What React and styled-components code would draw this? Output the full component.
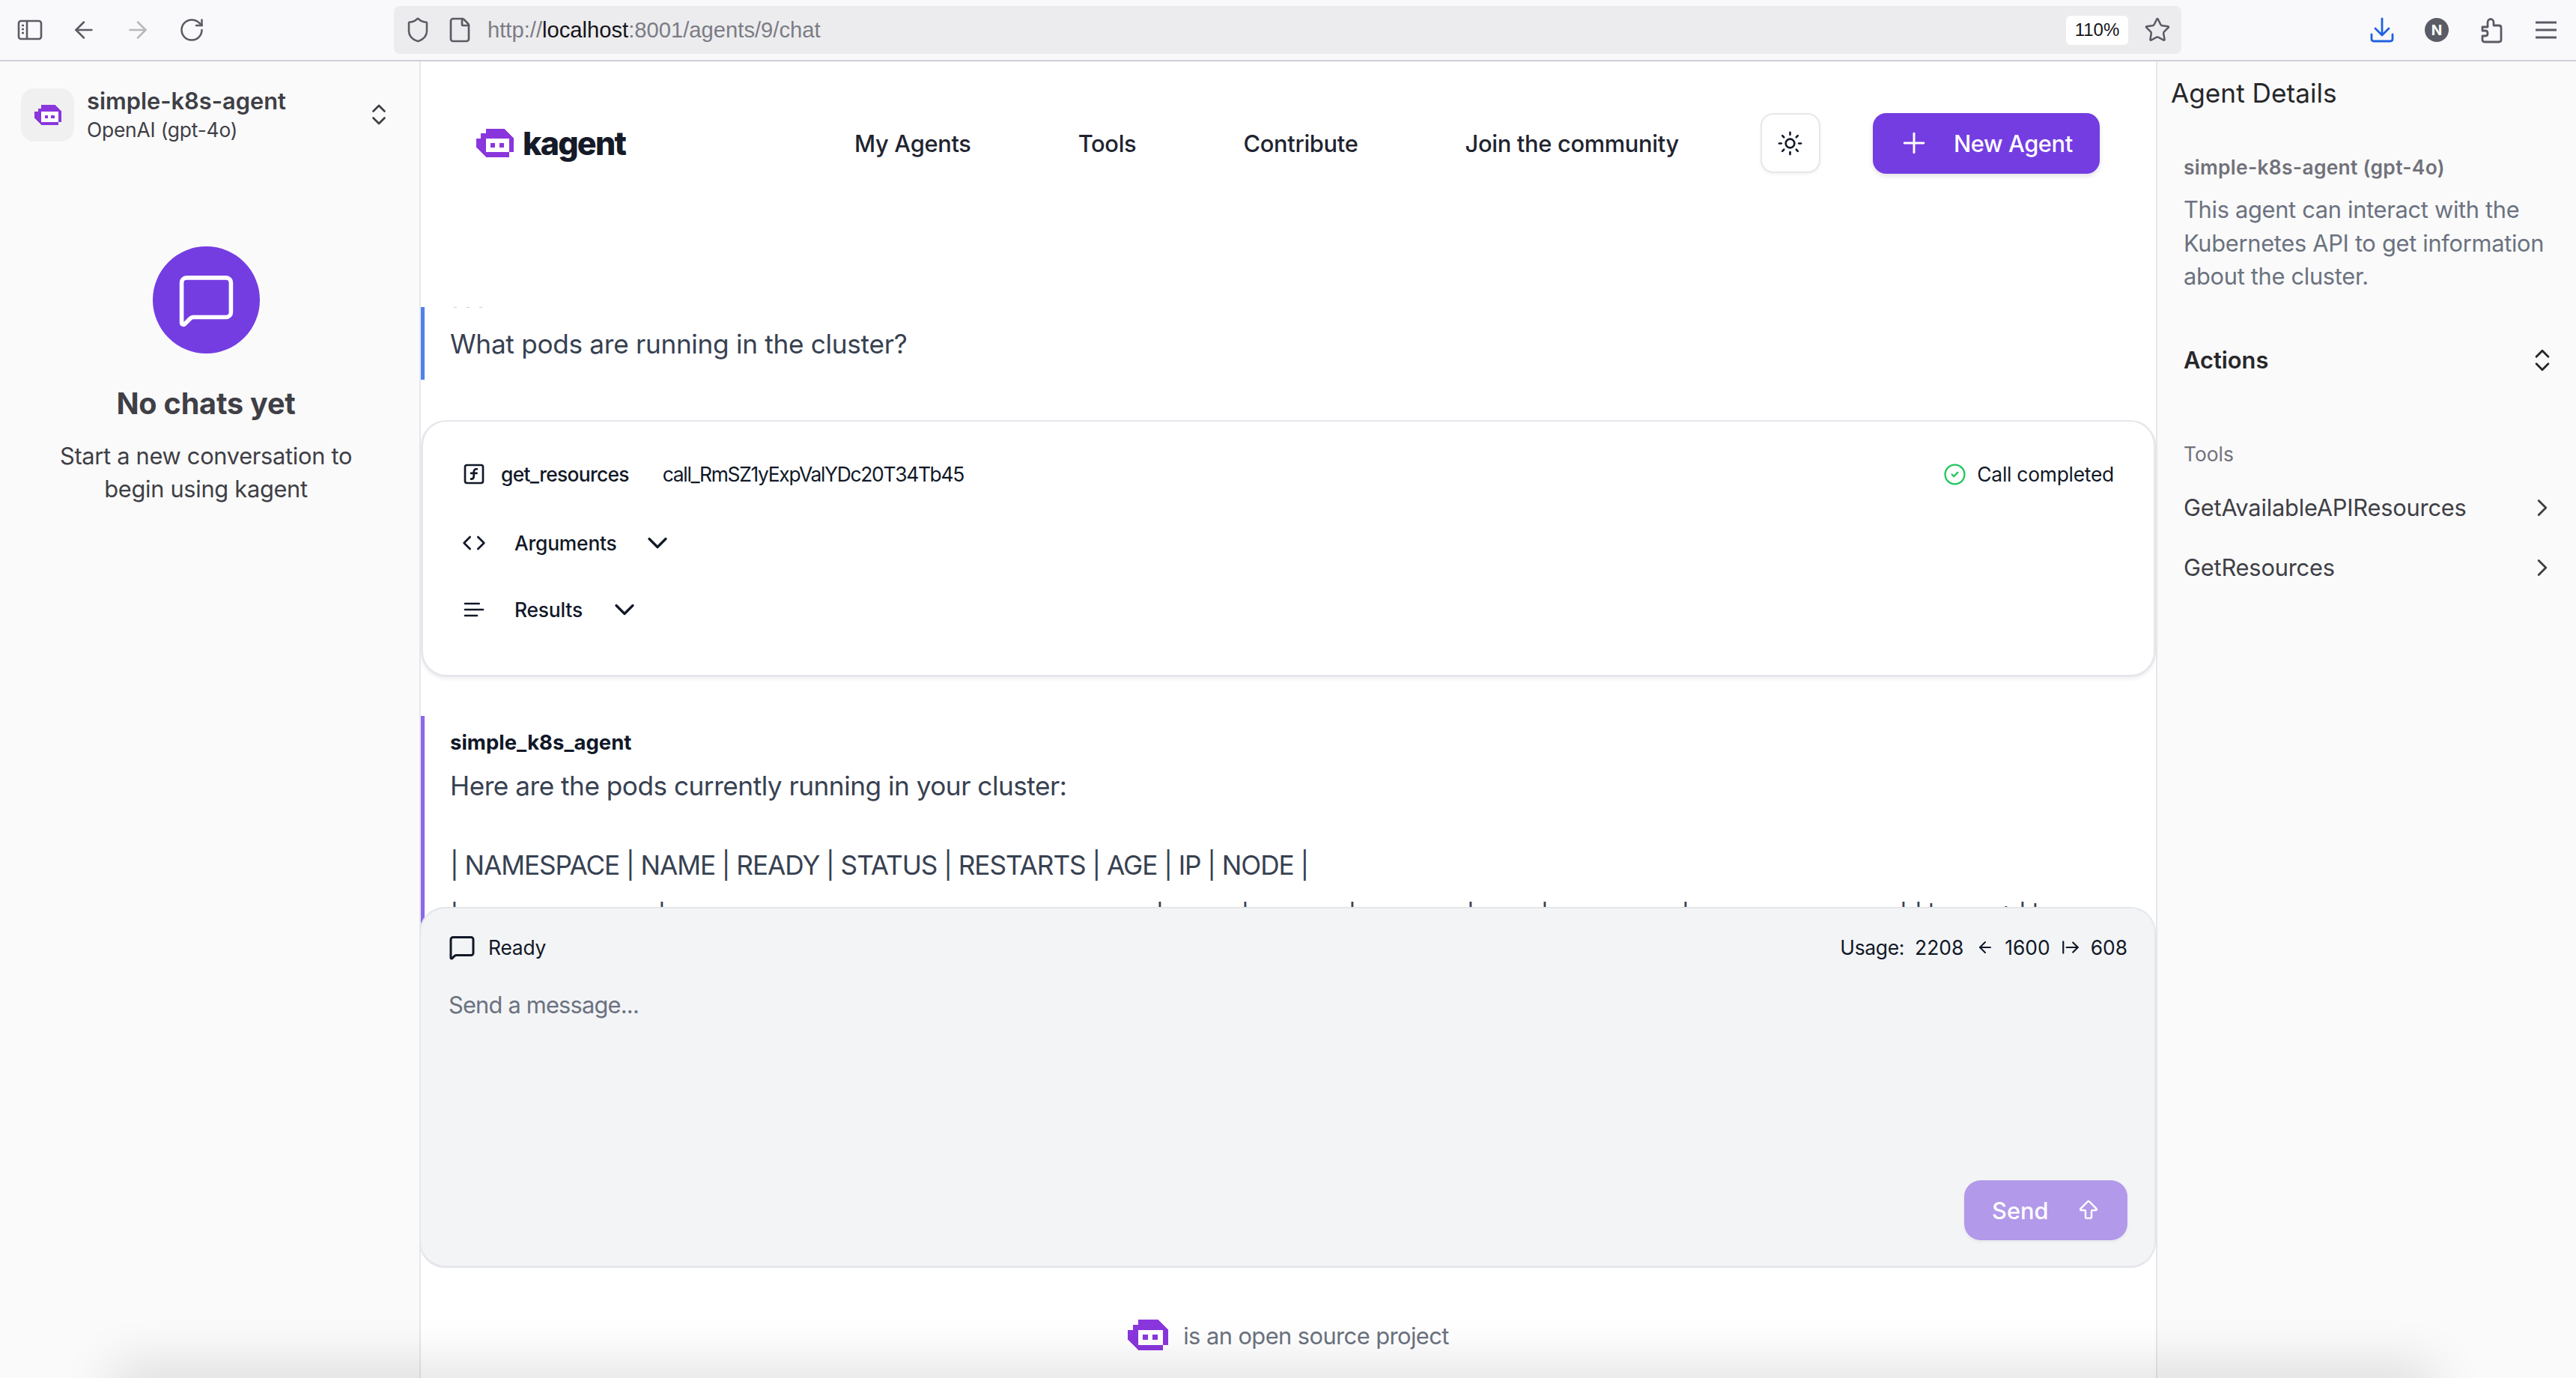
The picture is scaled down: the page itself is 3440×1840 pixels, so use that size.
import React from "react";
import styled, { createGlobalStyle } from "styled-components";
import {
  ArrowLeft,
  ArrowRight,
  ArrowRightFromLine,
  ArrowBigUp,
  ChevronDown,
  ChevronRight,
  ChevronsUpDown,
  CircleCheck,
  Code,
  File,
  MessageSquare,
  Plus,
  RotateCw,
  Shield,
  SquareFunction,
  Star,
  Sun,
} from "lucide-react";

const GlobalStyle = createGlobalStyle`
  html, body {
    margin: 0;
    padding: 0;
    height: 100%;
    background: #ffffff;
    font-family: Inter, "Noto Sans", "Liberation Sans", sans-serif;
  }
  * { box-sizing: border-box; }
`;

const Page = styled.div`
  position: relative;
  width: 100vw;
  height: 100vh;
  display: flex;
  flex-direction: column;
  overflow: hidden;
`;

/* browser toolbar */
const BrowserBar = styled.div`
  flex: none;
  height: 82px;
  padding: 8px 22px;
  display: flex;
  align-items: center;
  background: #f9f9fb;
  border-bottom: 2px solid #cfcfd8;
`;

const ToolGroup = styled.div`
  display: flex;
  align-items: center;
  gap: ${(p) => p.$gap || 36}px;
`;

const ToolIcon = styled.span`
  width: 36px;
  height: 36px;
  margin-left: ${(p) => p.$before || 0}px;
  display: flex;
  align-items: center;
  justify-content: center;
  color: ${(p) => p.$color || "#5b5b66"};
`;

const UrlBar = styled.div`
  margin-left: 252px;
  width: 2387px;
  height: 64px;
  padding: 0 14px;
  display: flex;
  align-items: center;
  background: #ececee;
  border-radius: 8px;
`;

const UrlText = styled.div`
  margin-left: 19px;
  font-family: "Liberation Sans", sans-serif;
  font-size: 29.2px;
  color: #7c7c85;
  white-space: nowrap;
  b {
    font-weight: 400;
    color: #15141a;
  }
`;

const ZoomChip = styled.div`
  margin-left: auto;
  margin-right: 21px;
  width: 83px;
  height: 39px;
  display: flex;
  align-items: center;
  justify-content: center;
  background: #ffffff;
  border-radius: 6px;
  font-family: "Liberation Sans", sans-serif;
  font-size: 24px;
  color: #15141a;
`;

const RightTools = styled(ToolGroup)`
  margin-left: auto;
`;

const NBadge = styled.span`
  width: 32px;
  height: 32px;
  border-radius: 50%;
  display: flex;
  align-items: center;
  justify-content: center;
  background: #5b5b66;
  color: #ffffff;
  font-size: 19px;
  font-weight: 700;
`;

/* three panel layout */
const Workspace = styled.div`
  flex: 1;
  min-height: 0;
  display: flex;
`;

const LeftPanel = styled.aside`
  flex: none;
  width: 562px;
  background: #fafafa;
  border-right: 2px solid #e5e7eb;
`;

const AgentPicker = styled.div`
  padding: 33px 36px 0 28px;
  display: flex;
  align-items: center;
`;

const AgentAvatar = styled.div`
  flex: none;
  width: 71px;
  height: 71px;
  margin-right: 17px;
  display: flex;
  align-items: center;
  justify-content: center;
  background: #f0f0f0;
  border-radius: 18px;
`;

const AgentText = styled.div`
  flex: 1;
  display: flex;
  flex-direction: column;
`;

const AgentName = styled.div`
  font-size: 30.8px;
  line-height: 40px;
  font-weight: 600;
  color: #3f3f46;
`;

const AgentModel = styled.div`
  font-size: 26.4px;
  line-height: 36px;
  letter-spacing: -0.2px;
  color: #3f3f46;
`;

const EmptyChats = styled.div`
  margin-top: 138px;
  padding-right: 10px;
  display: flex;
  flex-direction: column;
  align-items: center;
  text-align: center;
`;

const EmptyCircle = styled.div`
  width: 143px;
  height: 143px;
  display: flex;
  align-items: center;
  justify-content: center;
  border-radius: 50%;
  background: #743de2;
  color: #ffffff;
`;

const EmptyTitle = styled.h2`
  margin: 42px 0 0;
  font-size: 39.6px;
  line-height: 50px;
  font-weight: 700;
  letter-spacing: -0.2px;
  color: #3f3f46;
`;

const EmptyText = styled.p`
  margin: 23px 0 0;
  width: 440px;
  font-size: 30.8px;
  line-height: 44px;
  letter-spacing: -0.3px;
  color: #3f3f46;
`;

const MainColumn = styled.main`
  flex: 1;
  min-width: 0;
  display: flex;
  flex-direction: column;
  background: #ffffff;
`;

const Header = styled.header`
  flex: none;
  height: 218px;
  margin-bottom: 110px;
  padding-left: 74px;
  display: flex;
  align-items: center;
`;

const Brand = styled.div`
  width: 505px;
  display: flex;
  align-items: center;
  gap: 12px;
`;

const BrandName = styled.span`
  font-size: 43px;
  line-height: 50px;
  font-weight: 800;
  letter-spacing: -1.8px;
  color: #151a29;
`;

const Nav = styled.nav`
  display: flex;
  align-items: center;
  gap: 143px;
`;

const NavLink = styled.a`
  font-size: 30.8px;
  font-weight: 500;
  letter-spacing: -0.3px;
  color: #1f2430;
  white-space: nowrap;
`;

const ThemeButton = styled.button`
  margin-left: 109px;
  width: 80px;
  height: 80px;
  padding: 0;
  display: flex;
  align-items: center;
  justify-content: center;
  background: #ffffff;
  border: 2px solid #e5e7eb;
  border-radius: 17px;
  box-shadow: 0 2px 4px rgba(0, 0, 0, 0.05);
  color: #111827;
`;

const NewAgentButton = styled.button`
  margin-left: 70px;
  width: 303px;
  height: 81px;
  padding: 0 0 0 33px;
  display: flex;
  align-items: center;
  gap: 31px;
  border: 0;
  border-radius: 18px;
  background: #743de2;
  box-shadow: 0 3px 6px rgba(0, 0, 0, 0.12);
  color: #ffffff;
  font-family: inherit;
  font-size: 30.8px;
  font-weight: 500;
  letter-spacing: -0.4px;
`;

/* messages */
const MessageList = styled.div`
  flex: 1;
  min-height: 0;
  margin-bottom: -29px;
  overflow: hidden;
`;

const Message = styled.div`
  height: ${(p) => p.$height}px;
  padding-left: 34px;
  overflow: hidden;
  border-left: 5px solid ${(p) => p.$bar};
  color: #374151;
`;

const ClippedName = styled.div`
  width: 40px;
  height: 1px;
  margin-left: 5px;
  background: repeating-linear-gradient(90deg, #c9ccd2 0 4px, transparent 4px 17px);
`;

const UserText = styled.div`
  margin-top: 26px;
  font-size: 35.2px;
  line-height: 44px;
  letter-spacing: -0.3px;
`;

const ToolCard = styled.section`
  margin: 54px 0 52px;
  height: 343px;
  padding: 50px 53px 0 52px;
  display: flex;
  flex-direction: column;
  background: #ffffff;
  border: 3px solid #e5e7eb;
  border-top-width: 2px;
  border-radius: 34px;
  box-shadow: 0 3px 5px rgba(0, 0, 0, 0.06);
  color: #111827;
`;

const ToolRow = styled.div`
  height: 40px;
  margin-bottom: ${(p) => p.$after || 0}px;
  display: flex;
  align-items: center;
`;

const RowIcon = styled.span`
  flex: none;
  width: 32px;
  margin-right: ${(p) => p.$gap}px;
  display: flex;
  align-items: center;
  justify-content: center;
`;

const ToolName = styled.span`
  font-size: 26.4px;
  font-weight: 500;
  letter-spacing: -0.7px;
`;

const CallId = styled.span`
  margin-left: 45px;
  font-size: 26.4px;
  letter-spacing: -1.3px;
`;

const CallStatus = styled.span`
  margin-left: auto;
  display: flex;
  align-items: center;
  gap: 14px;
  font-size: 26.4px;
  letter-spacing: -0.25px;
`;

const SectionLabel = styled.span`
  margin-right: ${(p) => p.$gap}px;
  font-size: 26.4px;
  font-weight: 500;
  letter-spacing: -0.2px;
`;

const SpeakerName = styled.div`
  margin-top: 17px;
  font-size: 27.5px;
  line-height: 36px;
  font-weight: 700;
  color: #111827;
`;

const ReplyLine = styled.div`
  margin-top: ${(p) => p.$top}px;
  font-size: 35.2px;
  line-height: 44px;
  letter-spacing: ${(p) => p.$track}px;
  white-space: nowrap;
`;

const TableRow = styled.div`
  margin-top: 26px;
  display: flex;
  align-items: flex-start;
  font-size: 35.2px;
  line-height: 44px;
`;

const TableCell = styled.span`
  flex: none;
  width: ${(p) => p.$w}px;
  padding-top: ${(p) => p.$drop || 0}px;
`;

/* chat input */
const InputPanel = styled.section`
  position: relative;
  z-index: 2;
  flex: none;
  height: 482px;
  padding: 0 36px 0 37px;
  display: flex;
  flex-direction: column;
  background: #f3f4f6;
  border: 3px solid #e5e7eb;
  border-width: 2px 2px 3px 0;
  border-radius: 34px;
  box-shadow: -2px 0 0 #e5e7eb;
`;

const StatusRow = styled.div`
  height: 44px;
  margin-top: 30px;
  display: flex;
  align-items: center;
  justify-content: space-between;
  color: #111827;
`;

const StatusLeft = styled.div`
  display: flex;
  align-items: center;
  gap: 17px;
  font-size: 26.4px;
  letter-spacing: -0.2px;
`;

const UsageGroup = styled.div`
  display: flex;
  align-items: center;
  gap: 14px;
  font-size: 26.4px;
  letter-spacing: -0.3px;
`;

const UsageValue = styled.span`
  margin-left: ${(p) => p.$gap || 0}px;
  margin-right: ${(p) => p.$after || 0}px;
  letter-spacing: 0;
`;

const Placeholder = styled.div`
  margin-top: 33px;
  font-size: 30.8px;
  line-height: 44px;
  letter-spacing: -0.8px;
  color: #6b7280;
`;

const SendButton = styled.button`
  margin-top: auto;
  margin-bottom: 34px;
  align-self: flex-end;
  width: 218px;
  height: 80px;
  padding: 0 0 0 37px;
  display: flex;
  align-items: center;
  gap: 37px;
  border: 0;
  border-radius: 22px;
  background: #b299ea;
  box-shadow: 0 2px 4px rgba(0, 0, 0, 0.06);
  color: #ffffff;
  font-family: inherit;
  font-size: 30.8px;
  font-weight: 500;
`;

const Footer = styled.footer`
  flex: none;
  height: 147px;
  padding-top: 69px;
  display: flex;
  justify-content: center;
  align-items: flex-start;
  gap: 20px;
  font-size: 30.8px;
  line-height: 44px;
  letter-spacing: -0.55px;
  color: #6b7280;
`;

/* right panel */
const RightPanel = styled.aside`
  flex: none;
  width: 561px;
  padding: 20px 26px 0 18px;
  background: #fafafa;
  border-left: 2px solid #e5e7eb;
`;

const DetailsTitle = styled.h2`
  margin: 0;
  font-size: 35.2px;
  line-height: 44px;
  font-weight: 400;
  letter-spacing: 0;
  color: #27272a;
`;

const DetailsBody = styled.div`
  padding-left: 17px;
`;

const DetailsName = styled.div`
  margin-top: 59px;
  font-size: 26.4px;
  line-height: 36px;
  font-weight: 600;
  letter-spacing: 0.3px;
  color: #71717a;
`;

const DetailsDesc = styled.p`
  margin: 17px 0 0;
  font-size: 30.8px;
  line-height: 44.5px;
  letter-spacing: -0.3px;
  color: #6b7280;
`;

const ActionsRow = styled.div`
  margin-top: 67px;
  height: 44px;
  display: flex;
  align-items: center;
  justify-content: space-between;
  font-size: 30.8px;
  font-weight: 600;
  color: #27272a;
`;

const ToolsLabel = styled.div`
  margin-top: 85px;
  font-size: 26.4px;
  line-height: 36px;
  color: #71717a;
`;

const ToolLink = styled.div`
  margin-top: ${(p) => p.$top}px;
  height: 44px;
  display: flex;
  align-items: center;
  justify-content: space-between;
  font-size: 30.8px;
  letter-spacing: -0.2px;
  color: #3f3f46;
`;

const IconEdge = styled.span`
  display: flex;
`;

/* soft window shadow along the bottom of the picture */
const WindowShade = styled.div`
  position: absolute;
  left: 160px;
  right: 200px;
  bottom: -30px;
  height: 30px;
  box-shadow: 0 0 70px 10px rgba(0, 0, 0, 0.16);
  pointer-events: none;
  z-index: 5;
`;

const Logo = ({ width }) => (
  <svg width={width} height={(width * 6) / 8} viewBox="0 0 8 6" shapeRendering="crispEdges">
    <path d="M2 0H6L8 2V5H7V6H2L0 4V2H1V1H2Z" fill="#8a36dd" />
    <path d="M2 2H7V5H2Z" fill="#ffffff" />
    <path d="M3 3H4V4H3ZM4.9 3H5.9V4H4.9Z" fill="#8a36dd" />
  </svg>
);

const SidebarGlyph = () => (
  <svg width="34" height="34" viewBox="0 0 34 34" fill="none" stroke="currentColor" strokeWidth="2.6">
    <rect x="2" y="5" width="30" height="24" rx="3" />
    <path d="M13 5V29" />
    <path d="M6 11H9M6 16H9M6 21H9" />
  </svg>
);

const DownloadGlyph = () => (
  <svg width="36" height="36" viewBox="0 0 36 36" fill="none" stroke="#1f62e0" strokeWidth="2.8" strokeLinecap="round" strokeLinejoin="round">
    <path d="M18 3V25M9 16L18 25L27 16" />
    <path d="M4 24V30C4 32 5 33 7 33H29C31 33 32 32 32 30V24" />
  </svg>
);

const PuzzleGlyph = () => (
  <svg width="36" height="36" viewBox="0 0 36 36" fill="none" stroke="currentColor" strokeWidth="2.8" strokeLinejoin="round">
    <path d="M6 14H13V8C13 2 21 2 21 8V12H28C30 12 31 13 31 15V31C31 33 30 34 28 34H9C7 34 6 33 6 31V26H10C14 26 14 19 10 19H6Z" />
  </svg>
);

const MenuGlyph = () => (
  <svg width="34" height="34" viewBox="0 0 34 34" stroke="currentColor" strokeWidth="3">
    <path d="M3 7H31M3 17H31M3 27H31" />
  </svg>
);

const LinesGlyph = () => (
  <svg width="40" height="40" viewBox="0 0 24 24" fill="none" stroke="currentColor" strokeWidth="2" strokeLinecap="round">
    <path d="M3 6H17M3 12H21M3 18H15" />
  </svg>
);

const tableCells = [
  { w: 277 },
  { w: 665 },
  { w: 114 },
  { w: 143 },
  { w: 158 },
  { w: 99 },
  { w: 188 },
  { w: 291 },
  { w: 20 },
  { w: 17 },
  { w: 100, drop: 2 },
  { w: 22, drop: 6 },
  { w: 17 },
  { w: 17, drop: 2 },
];

const App = () => {
  return (
    <Page>
      <GlobalStyle />
      <BrowserBar>
        <ToolGroup>
          <ToolIcon><SidebarGlyph /></ToolIcon>
          <ToolIcon><ArrowLeft size={38} strokeWidth={1.7} /></ToolIcon>
          <ToolIcon $color="#b8b8bd"><ArrowRight size={38} strokeWidth={1.7} /></ToolIcon>
          <ToolIcon><RotateCw size={36} strokeWidth={1.7} /></ToolIcon>
        </ToolGroup>
        <UrlBar>
          <ToolIcon><Shield size={36} strokeWidth={1.7} /></ToolIcon>
          <ToolIcon $before={20}><File size={36} strokeWidth={1.8} /></ToolIcon>
          <UrlText>http://<b>localhost</b>:8001/agents/9/chat</UrlText>
          <ZoomChip>110%</ZoomChip>
          <ToolIcon><Star size={36} strokeWidth={1.7} /></ToolIcon>
        </UrlBar>
        <RightTools $gap={37}>
          <ToolIcon><DownloadGlyph /></ToolIcon>
          <ToolIcon><NBadge>N</NBadge></ToolIcon>
          <ToolIcon><PuzzleGlyph /></ToolIcon>
          <ToolIcon><MenuGlyph /></ToolIcon>
        </RightTools>
      </BrowserBar>

      <Workspace>
        <LeftPanel>
          <AgentPicker>
            <AgentAvatar><Logo width={36} /></AgentAvatar>
            <AgentText>
              <AgentName>simple-k8s-agent</AgentName>
              <AgentModel>OpenAI (gpt-4o)</AgentModel>
            </AgentText>
            <ChevronsUpDown size={36} strokeWidth={1.8} color="#3f3f46" />
          </AgentPicker>
          <EmptyChats>
            <EmptyCircle><MessageSquare size={79} strokeWidth={1.7} /></EmptyCircle>
            <EmptyTitle>No chats yet</EmptyTitle>
            <EmptyText>Start a new conversation to begin using kagent</EmptyText>
          </EmptyChats>
        </LeftPanel>

        <MainColumn>
          <Header>
            <Brand>
              <Logo width={50} />
              <BrandName>kagent</BrandName>
            </Brand>
            <Nav>
              <NavLink>My Agents</NavLink>
              <NavLink>Tools</NavLink>
              <NavLink>Contribute</NavLink>
              <NavLink>Join the community</NavLink>
            </Nav>
            <ThemeButton><Sun size={35} strokeWidth={1.8} /></ThemeButton>
            <NewAgentButton><Plus size={44} strokeWidth={1.6} />New Agent</NewAgentButton>
          </Header>

          <MessageList>
            <Message $height={97} $bar="#4f81ea">
              <ClippedName />
              <UserText>What pods are running in the cluster?</UserText>
            </Message>

            <ToolCard>
              <ToolRow $after={52}>
                <RowIcon $gap={20}><SquareFunction size={40} strokeWidth={2} /></RowIcon>
                <ToolName>get_resources</ToolName>
                <CallId>call_RmSZ1yExpValYDc20T34Tb45</CallId>
                <CallStatus>
                  <CircleCheck size={31} strokeWidth={1.8} color="#22c55e" />
                  Call completed
                </CallStatus>
              </ToolRow>
              <ToolRow $after={49}>
                <RowIcon $gap={38}><Code size={38} strokeWidth={2} /></RowIcon>
                <SectionLabel $gap={32}>Arguments</SectionLabel>
                <ChevronDown size={44} strokeWidth={1.8} />
              </ToolRow>
              <ToolRow>
                <RowIcon $gap={38}><LinesGlyph /></RowIcon>
                <SectionLabel $gap={34}>Results</SectionLabel>
                <ChevronDown size={44} strokeWidth={1.8} />
              </ToolRow>
            </ToolCard>

            <Message $height={290} $bar="#8b67ea">
              <SpeakerName>simple_k8s_agent</SpeakerName>
              <ReplyLine $top={18} $track={-0.5}>Here are the pods currently running in your cluster:</ReplyLine>
              <ReplyLine $top={62} $track={-1.05}>| NAMESPACE | NAME | READY | STATUS | RESTARTS | AGE | IP | NODE |</ReplyLine>
              <TableRow>
                {tableCells.map((cell, i) => (
                  <TableCell key={i} $w={cell.w} $drop={cell.drop}>|</TableCell>
                ))}
              </TableRow>
            </Message>
          </MessageList>

          <InputPanel>
            <StatusRow>
              <StatusLeft>
                <MessageSquare size={36} strokeWidth={2} />
                Ready
              </StatusLeft>
              <UsageGroup>
                Usage:
                <UsageValue $after={3}>2208</UsageValue>
                <ArrowLeft size={24} strokeWidth={2} />
                <UsageValue>1600</UsageValue>
                <ArrowRightFromLine size={26} strokeWidth={2} />
                <UsageValue>608</UsageValue>
              </UsageGroup>
            </StatusRow>
            <Placeholder>Send a message...</Placeholder>
            <SendButton>Send<ArrowBigUp size={32} strokeWidth={1.8} /></SendButton>
          </InputPanel>

          <Footer>
            <Logo width={54} />
            is an open source project
          </Footer>
        </MainColumn>

        <RightPanel>
          <DetailsTitle>Agent Details</DetailsTitle>
          <DetailsBody>
            <DetailsName>simple-k8s-agent (gpt-4o)</DetailsName>
            <DetailsDesc>This agent can interact with the Kubernetes API to get information about the cluster.</DetailsDesc>
            <ActionsRow>
              Actions
              <IconEdge><ChevronsUpDown size={38} strokeWidth={1.8} /></IconEdge>
            </ActionsRow>
            <ToolsLabel>Tools</ToolsLabel>
            <ToolLink $top={32}>
              GetAvailableAPIResources
              <IconEdge><ChevronRight size={38} strokeWidth={1.8} /></IconEdge>
            </ToolLink>
            <ToolLink $top={36}>
              GetResources
              <IconEdge><ChevronRight size={38} strokeWidth={1.8} /></IconEdge>
            </ToolLink>
          </DetailsBody>
        </RightPanel>
      </Workspace>
      <WindowShade />
    </Page>
  );
};

export default App;
